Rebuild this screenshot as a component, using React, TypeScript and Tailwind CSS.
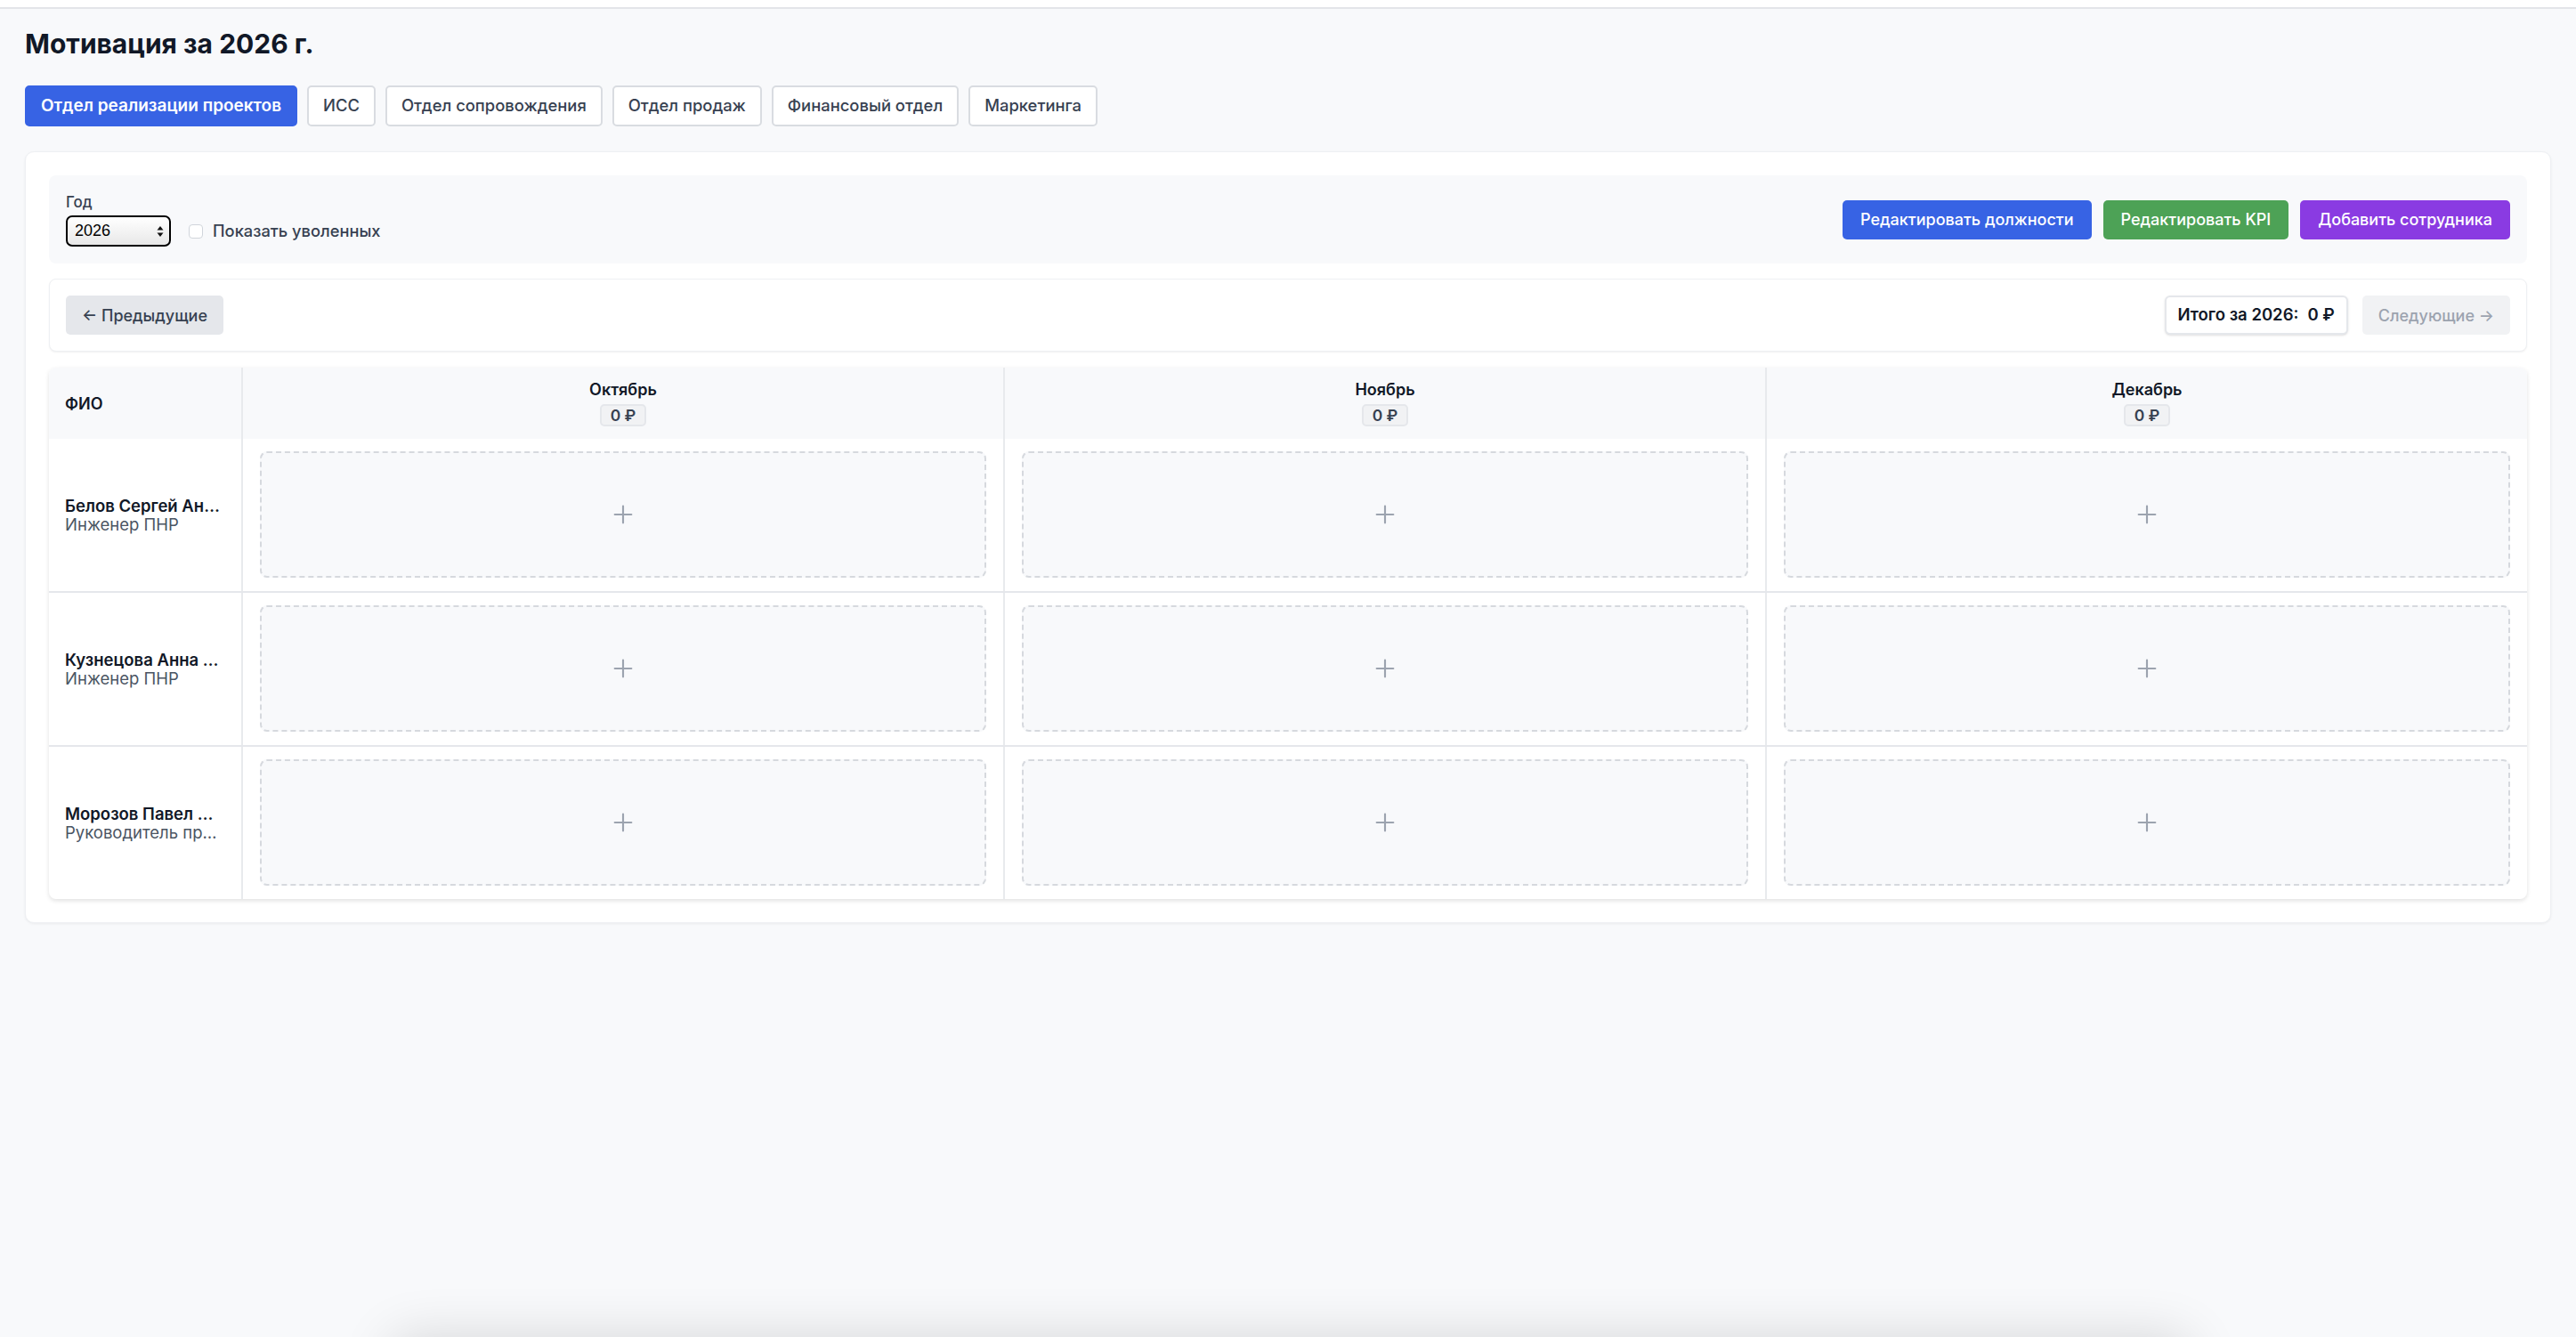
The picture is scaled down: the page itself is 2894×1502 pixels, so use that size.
import React, { useState } from "react";
import { Plus } from "lucide-react";

interface Employee {
  id: number;
  name: string;
  position: string;
}

const departments = [
  "Отдел реализации проектов",
  "ИСС",
  "Отдел сопровождения",
  "Отдел продаж",
  "Финансовый отдел",
  "Маркетинга",
];

const months = ["Октябрь", "Ноябрь", "Декабрь"];

const employees: Employee[] = [
  { id: 1, name: "Белов Сергей Андреевич", position: "Инженер ПНР" },
  { id: 2, name: "Кузнецова Анна Викторовна", position: "Инженер ПНР" },
  { id: 3, name: "Морозов Павел Игоревич", position: "Руководитель проектов" },
];

const SelectArrows = () => (
  <svg width="8" height="14" viewBox="0 0 8 14" className="pointer-events-none absolute right-[8px] top-1/2 -translate-y-1/2">
    <path d="M4 1 L7.5 5.5 H0.5 Z" fill="#111" />
    <path d="M4 13 L7.5 8.5 H0.5 Z" fill="#111" />
  </svg>
);

const EmptyCell = () => (
  <div className="flex h-[142px] cursor-pointer items-center justify-center rounded-lg border-2 border-dashed border-[#d6d9de] bg-[#f8f9fb]">
    <Plus className="h-[32px] w-[32px] text-[#9ca3af]" strokeWidth={1.6} />
  </div>
);

export default function App() {
  const [activeDept, setActiveDept] = useState(0);
  const [showFired, setShowFired] = useState(false);
  const [year, setYear] = useState("2026");

  return (
    <div className="relative min-h-screen overflow-hidden bg-[#f8f9fb] font-['Inter','Noto_Sans',sans-serif] text-[#111827]">
      <div className="h-[10px] border-b-2 border-[#e3e5e9] bg-white" />

      <div className="px-[28px]">
        <h1 className="mt-[21px] text-[30px] font-bold leading-[36px] text-[#111827]">
          Мотивация за 2026 г.
        </h1>

        <div className="mt-[29px] flex gap-[11px]">
          {departments.map((d, i) => (
            <button
              key={d}
              onClick={() => setActiveDept(i)}
              className={
                i === activeDept
                  ? "h-[46px] rounded-[5px] border-2 border-[#3763e4] bg-[#3763e4] px-[16px] text-[19px] font-semibold text-white"
                  : "h-[46px] rounded-[5px] border-2 border-[#d9dce1] bg-white px-[16px] text-[18.4px] font-medium text-[#374151]"
              }
            >
              {d}
            </button>
          ))}
        </div>

        <div className="mt-[28px] rounded-[10px] border border-[#eef0f3] bg-white p-[26px] shadow-[0_1px_3px_rgba(0,0,0,0.06)]">
          {/* filters */}
          <div className="flex items-center justify-between rounded-lg bg-[#f8f9fb] px-[19px] py-[19px]">
            <div>
              <div className="text-[17px] font-medium leading-[22px] text-[#374151]">Год</div>
              <div className="mt-[4px] flex items-center gap-[20px]">
                <div className="relative">
                  <select
                    value={year}
                    onChange={(e) => setYear(e.target.value)}
                    className="h-[35px] w-[118px] appearance-none rounded-[7px] border-2 border-black bg-gradient-to-b from-white to-[#e8e8e8] pl-[8px] font-['Liberation_Sans',sans-serif] text-[18px] text-black outline-none"
                  >
                    <option>2024</option>
                    <option>2025</option>
                    <option>2026</option>
                  </select>
                  <SelectArrows />
                </div>
                <label className="flex cursor-pointer items-center gap-[11px] text-[18.3px] font-medium text-[#374151]">
                  <input
                    type="checkbox"
                    checked={showFired}
                    onChange={(e) => setShowFired(e.target.checked)}
                    className="h-[16px] w-[16px] appearance-none rounded-[4px] border border-[#d1d5db] bg-white"
                  />
                  Показать уволенных
                </label>
              </div>
            </div>
            <div className="flex gap-[13px]">
              <button className="h-[44px] rounded-[5px] bg-[#3763e4] px-[20px] text-[18px] font-medium text-white">
                Редактировать должности
              </button>
              <button className="h-[44px] rounded-[5px] bg-[#4da256] px-[20px] text-[18px] font-medium text-white">
                Редактировать KPI
              </button>
              <button className="h-[44px] rounded-[5px] bg-[#8a3be2] px-[20px] text-[18px] font-medium text-white">
                Добавить сотрудника
              </button>
            </div>
          </div>

          {/* period navigation */}
          <div className="mt-[17px] flex items-center justify-between rounded-lg border border-[#eef0f3] bg-white px-[18px] py-[18px] shadow-[0_1px_2px_rgba(0,0,0,0.06)]">
            <button className="h-[44px] rounded-[5px] bg-[#e5e7eb] px-[18px] text-[18px] font-medium text-[#374151]">
              ← Предыдущие
            </button>
            <div className="flex items-center gap-[16px]">
              <div className="flex h-[44px] items-center gap-[10px] rounded-md border-2 border-[#e5e7eb] bg-white px-[13px] text-[18.5px] font-semibold text-[#111827] shadow-sm">
                <span>Итого за 2026:</span>
                <span>0 ₽</span>
              </div>
              <button
                disabled
                className="h-[44px] rounded-[5px] bg-[#f1f2f4] px-[18px] text-[18px] font-medium text-[#9ca3af]"
              >
                Следующие →
              </button>
            </div>
          </div>

          {/* motivation grid */}
          <div className="mt-[18px] overflow-hidden rounded-lg bg-white shadow-[0_2px_5px_rgba(0,0,0,0.12)]">
            <div className="grid grid-cols-[216px_1fr_1fr_1fr] bg-[#f8f9fb]">
              <div className="flex h-[80px] items-center px-[18px] text-[18px] font-semibold">ФИО</div>
              {months.map((m) => (
                <div key={m} className="flex h-[80px] flex-col items-center justify-center gap-[6px] border-l-2 border-[#e8eaed]">
                  <div className="text-[18px] font-semibold leading-[21px]">{m}</div>
                  <div className="rounded-[5px] border-2 border-[#e5e7eb] bg-[#f1f2f4] px-[10px] text-[17.5px] font-semibold leading-[21px] text-[#374151]">
                    0 ₽
                  </div>
                </div>
              ))}
            </div>
            {employees.map((e, idx) => (
              <div
                key={e.id}
                className={
                  idx < employees.length - 1
                    ? "grid grid-cols-[216px_1fr_1fr_1fr] border-b-2 border-[#e5e7eb]"
                    : "grid grid-cols-[216px_1fr_1fr_1fr]"
                }
              >
                <div className="flex min-w-0 flex-col justify-center px-[18px]">
                  <div className="truncate text-[18.5px] font-semibold leading-[21px]">{e.name}</div>
                  <div className="truncate text-[18.5px] leading-[21px] text-[#4b5563]">{e.position}</div>
                </div>
                {months.map((m) => (
                  <div key={m} className="border-l-2 border-[#e8eaed] px-[19px] pb-[15px] pt-[14px]">
                    <EmptyCell />
                  </div>
                ))}
              </div>
            ))}
          </div>
        </div>
      </div>

      {/* floating bottom panel, pushed just under the fold */}
      <div className="fixed left-[440px] top-full h-[120px] w-[2020px] rounded-2xl bg-white shadow-[0_0_60px_rgba(0,0,0,0.14)]" />
    </div>
  );
}
